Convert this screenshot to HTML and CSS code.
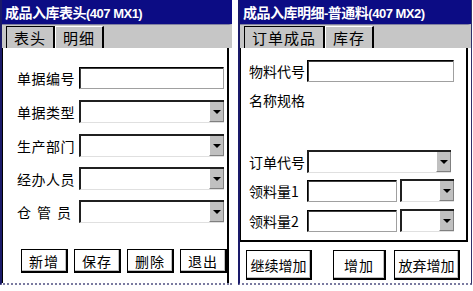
FILE: index.html
```html
<!DOCTYPE html>
<html lang="zh-CN">
<head>
    <meta charset="UTF-8">
    <title>成品入库</title>
    <link rel="stylesheet" href="styles.css">
</head>
<body>
<div class="screen">
    <div class="win winLeft">
        <div class="titleBar"><span class="titleText">成品入库表头</span><span class="titleCode">(407 MX1)</span></div>
        <div class="tabStrip">
            <span class="tab tabActive">表头</span>
            <span class="tab">明细</span>
        </div>
        <div class="page pageLeft">
            <div class="row rowFirst">
                <span class="label">单据编号</span>
                <span class="edit wide"></span>
            </div>
            <div class="row">
                <span class="label">单据类型</span>
                <span class="combo wide"><span class="arrow"></span></span>
            </div>
            <div class="row">
                <span class="label">生产部门</span>
                <span class="combo wide"><span class="arrow"></span></span>
            </div>
            <div class="row">
                <span class="label">经办人员</span>
                <span class="combo wide"><span class="arrow"></span></span>
            </div>
            <div class="row">
                <span class="label spaced">仓管员</span>
                <span class="combo wide"><span class="arrow"></span></span>
            </div>
            <div class="btnRow">
                <button class="btn">新增</button>
                <button class="btn">保存</button>
                <button class="btn">删除</button>
                <button class="btn">退出</button>
            </div>
        </div>
    </div>

    <div class="win winRight">
        <div class="titleBar"><span class="titleText">成品入库明细</span><span class="titleCode">-</span><span class="titleText">普通料</span><span class="titleCode">(407 MX2)</span></div>
        <div class="tabStrip">
            <span class="tab tabActive">订单成品</span>
            <span class="tab">库存</span>
        </div>
        <div class="page pageRight">
            <div class="row rowFirst">
                <span class="label">物料代号</span>
                <span class="edit wideR"></span>
            </div>
            <div class="row">
                <span class="label">名称规格</span>
            </div>
            <div class="row rowOrder">
                <span class="label">订单代号</span>
                <span class="combo wideO"><span class="arrow"></span></span>
            </div>
            <div class="row rowQty">
                <span class="label">领料量1</span>
                <span class="edit qty"></span>
                <span class="combo unit"><span class="arrow"></span></span>
            </div>
            <div class="row rowQty">
                <span class="label">领料量2</span>
                <span class="edit qty"></span>
                <span class="combo unit"><span class="arrow"></span></span>
            </div>
        </div>
        <div class="btnRow btnRowRight">
            <button class="btn btnLong">继续增加</button>
            <button class="btn btnMid">增加</button>
            <button class="btn btnLong">放弃增加</button>
        </div>
    </div>
</div>
</body>
</html>
```

FILE: styles.css
```css
body {
    margin: 0;
    background: #ffffff;
    font-family: "Noto Sans CJK SC", "Liberation Sans", sans-serif;
    font-size: 14px;
    color: #000000;
}

.screen {
    display: flex;
    gap: 6px;
    width: 473px;
    height: 291px;
}

.win {
    display: flex;
    flex-direction: column;
    height: 285px;
    border-left: 2px solid #1a1a6a;
    border-bottom: 2px dotted #7a7aa0;
    box-sizing: border-box;
}

.winLeft {
    width: 232px;
}

.winRight {
    width: 234px;
    border-right: 1px solid #30306a;
}

.titleBar {
    height: 24px;
    background: #0c0c84;
    color: #ffffff;
    font-weight: bold;
    font-size: 14px;
    line-height: 24px;
    padding-left: 3px;
    white-space: nowrap;
    letter-spacing: -0.5px;
}

.titleCode {
    font-family: "Liberation Sans", sans-serif;
    font-size: 13px;
}

.tabStrip {
    height: 24px;
    background: #c6c6c6;
    display: flex;
    align-items: flex-end;
    padding-left: 4px;
    border-top: 1px solid #8080a0;
    border-right: 3px solid #c6c6c6;
    box-sizing: border-box;
}

.tab {
    height: 21px;
    line-height: 21px;
    padding: 0 7px;
    border-left: 1px solid #ffffff;
    border-top: 1px solid #ffffff;
    border-right: 2px solid #000000;
    font-size: 15px;
    letter-spacing: 1px;
    background: #c6c6c6;
}

.tabActive {
    border-left: 1px solid #000000;
    border-top: 1px solid #000000;
}

.page {
    background: #ffffff;
    border-right: 2px solid #000000;
    border-left: 1px solid #000000;
    margin-right: 3px;
}

.pageLeft {
    flex: 1;
    padding: 18px 0 0 14px;
}

.pageRight {
    height: 194px;
    padding: 11px 0 0 8px;
    border-bottom: 2px solid #000000;
    box-sizing: border-box;
}

.row {
    display: flex;
    align-items: center;
    height: 23px;
    margin-bottom: 11px;
}

.pageLeft .row:nth-child(3),
.pageLeft .row:nth-child(4) {
    margin-bottom: 10px;
}

.pageRight .row {
    margin-bottom: 6px;
}

.pageRight .rowOrder {
    margin-top: 39px;
}

.pageRight .rowQty {
    margin-bottom: 7px;
}

.label {
    width: 62px;
    flex: none;
    white-space: nowrap;
    letter-spacing: 0.5px;
}

.pageRight .label {
    width: 58px;
    letter-spacing: 0;
}

.spaced {
    letter-spacing: 6px;
}

.edit {
    height: 22px;
    border: 1px solid #000000;
    border-right-color: #a0a0a0;
    border-bottom-color: #a0a0a0;
    box-shadow: inset 1px 1px 0 #404040;
    box-sizing: border-box;
    background: #ffffff;
}

.combo {
    height: 23px;
    border-top: 2px solid #202020;
    border-left: 2px solid #202020;
    border-bottom: 1px solid #e0e0e0;
    box-sizing: border-box;
    display: flex;
    justify-content: flex-end;
    background: #ffffff;
}

.arrow {
    width: 15px;
    height: 100%;
    background: #c0c0c0;
    border-left: 1px solid #ffffff;
    border-right: 1px solid #808080;
    border-bottom: 1px solid #808080;
    box-sizing: border-box;
    position: relative;
}

.arrow::after {
    content: "";
    position: absolute;
    left: 3px;
    top: 8px;
    border-left: 4px solid transparent;
    border-right: 4px solid transparent;
    border-top: 4px solid #000000;
}

.wide {
    width: 145px;
}

.wideR {
    width: 147px;
}

.wideO {
    width: 144px;
}

.qty {
    width: 90px;
    margin-right: 3px;
}

.unit {
    width: 54px;
}

.btnRow {
    display: flex;
    gap: 6px;
    margin-top: 26px;
    padding-left: 4px;
}

.btn {
    height: 24px;
    padding: 0;
    font-family: inherit;
    font-size: 14px;
    letter-spacing: 1px;
    white-space: nowrap;
    background: #ffffff;
    border: 1px solid #000000;
    border-right-width: 2px;
    border-bottom-width: 2px;
    box-shadow: inset -1px -1px 0 #c0c0c0;
    color: #000000;
}

.pageLeft .btn {
    width: 47px;
}

.btnRowRight {
    margin-top: 8px;
    padding-left: 6px;
    gap: 0;
}

.btnLong {
    width: 66px;
    height: 30px;
    letter-spacing: 0;
}

.btnMid {
    width: 53px;
    height: 30px;
    margin: 0 8px 0 21px;
}
```
